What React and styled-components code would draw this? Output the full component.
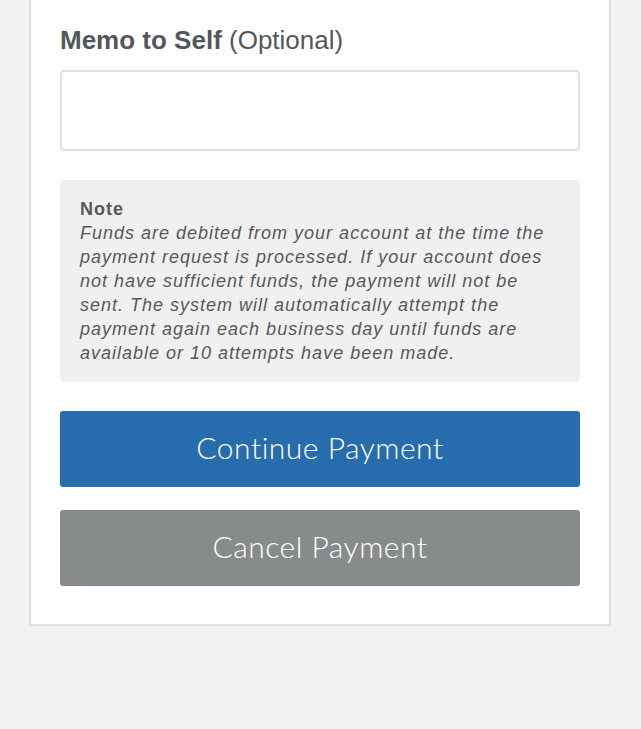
import React from "react";
import styled, { createGlobalStyle } from "styled-components";

const GlobalStyle = createGlobalStyle`
  body {
    margin: 0;
    background: #f2f2f2;
    font-family: "Liberation Sans", Arial, sans-serif;
  }
`;

const Page = styled.main`
  min-height: 729px;
  padding: 0 30px 0 29px;
`;

const Card = styled.section`
  background: #fff;
  border: 2px solid #dddddd;
  border-top: none;
  padding: 25px 29px 38px;
  display: flex;
  flex-direction: column;
`;

const Label = styled.label`
  font-size: 26px;
  color: #53575b;
  line-height: 30px;
  margin-bottom: 15px;

  strong {
    font-weight: 700;
  }
`;

const Muted = styled.span`
  font-weight: 400;
`;

const MemoInput = styled.input`
  box-sizing: border-box;
  height: 81px;
  width: 100%;
  border: 2px solid #e0e0e0;
  border-radius: 4px;
  font-size: 18px;
  margin-bottom: 29px;
`;

const Note = styled.div`
  background: #f0f0f0;
  border-radius: 4px;
  padding: 17px 20px 17px;
  color: #55595c;
  font-size: 18px;
  line-height: 24px;
  letter-spacing: 1px;
  margin-bottom: 29px;
`;

const NoteTitle = styled.div`
  font-weight: 700;
`;

const NoteText = styled.p`
  margin: 0;
  font-style: italic;
`;

const Button = styled.button`
  height: 76px;
  width: 100%;
  border: none;
  border-radius: 3px;
  padding: 0 0 5px;
  background: ${(props) => props.bg};
  color: #fff;
  font-family: "Lato", sans-serif;
  font-weight: 300;
  font-size: 30px;
  letter-spacing: 0.5px;
  margin-bottom: ${(props) => props.gap || "0"};
`;

const App = () => {
  return (
    <>
      <GlobalStyle />
      <Page>
        <Card>
          <Label>
            <strong>Memo to Self</strong> <Muted>(Optional)</Muted>
          </Label>
          <MemoInput type="text" />
          <Note>
            <NoteTitle>Note</NoteTitle>
            <NoteText>
              Funds are debited from your account at the time the payment
              request is processed. If your account does not have sufficient
              funds, the payment will not be sent. The system will
              automatically attempt the payment again each business day until
              funds are available or 10 attempts have been made.
            </NoteText>
          </Note>
          <Button bg="#276dad" gap="23px">
            Continue Payment
          </Button>
          <Button bg="#888b8c">Cancel Payment</Button>
        </Card>
      </Page>
    </>
  );
};

export default App;
